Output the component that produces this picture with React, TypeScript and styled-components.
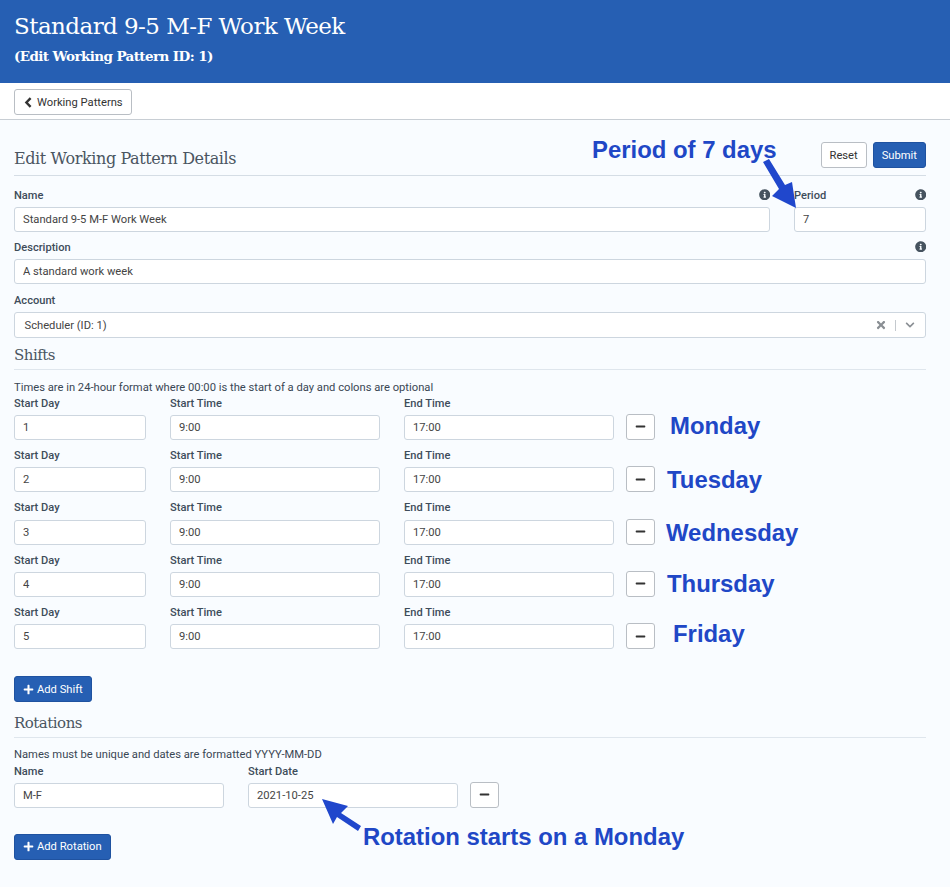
import React from "react";
import styled, { createGlobalStyle } from "styled-components";
import { FaChevronDown, FaInfoCircle, FaMinus, FaPlus, FaTimes } from "react-icons/fa";

const Global = createGlobalStyle`
  html, body { margin: 0; padding: 0; background: #f9fcff; }
  body { font-family: Roboto, "Liberation Sans", sans-serif; color: #3a4754; font-size: 11.2px; }
`;
const Page = styled.div`position: relative; height: 887px; overflow: hidden; background: #f9fcff;`;
const Header = styled.header`
  height: 83px; box-sizing: border-box; background: #265fb3; color: #fff; padding: 11px 14px 0;
  font-family: "DejaVu Serif", serif;
`;
const Title = styled.h1`margin: 0; font-weight: 400; font-size: 23px; line-height: 30px; letter-spacing: -0.55px;`;
const Subtitle = styled.h2`margin: 3px 0 0; font-weight: 700; font-size: 13.5px; line-height: 24px; letter-spacing: -0.6px;`;
const Toolbar = styled.div`
  height: 37px; box-sizing: border-box; background: #fff; border-bottom: 1px solid #c8ced4;
  padding: 6px 14px 0;
`;
const Button = styled.button<{ $primary?: boolean }>`
  display: inline-flex; align-items: center; justify-content: center; gap: 4px; box-sizing: border-box;
  height: 26px; padding: 0 8px; border-radius: 3px; font: 400 11.2px Roboto, sans-serif; cursor: pointer;
  background: ${p => (p.$primary ? "#265fb3" : "#fff")};
  color: ${p => (p.$primary ? "#fff" : "#333")};
  border: 1px solid ${p => (p.$primary ? "#1f52a0" : "#b9bec4")};
  svg { font-size: 11px; margin-right: -1px; }
`;
const Content = styled.main`padding: 22px 24px 0 14px;`;
const TopRow = styled.div`
  display: flex; align-items: flex-end; justify-content: space-between; height: 34px;
  border-bottom: 1px solid #d5dde5; padding-bottom: 7px; box-sizing: border-box; margin-bottom: 3.67px;
`;
const TopActions = styled.div`display: flex; gap: 6px;`;
const SectionTitle = styled.h3<{ $small?: boolean }>`
  margin: 0; font: 400 ${p => (p.$small ? 15 : 16)}px/20px "DejaVu Serif", serif; color: #4a5561;
  letter-spacing: ${p => (p.$small ? -0.5 : -0.4)}px;
`;
const TopTitle = styled(SectionTitle)`margin-bottom: -1px;`;
const SectionHead = styled.div<{ $top: number }>`
  border-bottom: 1px solid #dfe6ed; height: 25px; box-sizing: border-box; margin-top: ${p => p.$top}px;
`;
const Help = styled.p<{ $top: number }>`
  margin: ${p => p.$top}px 0 0; font-size: 11.2px; line-height: 18px; height: 18px; color: #3a4754;
`;
const RowList = styled.div<{ $top: number }>`margin-top: ${p => p.$top}px;`;
const Row = styled.div`display: flex; gap: 24px; align-items: flex-end;`;
const FieldBox = styled.div<{ $width?: number }>`
  ${p => (p.$width ? `width: ${p.$width}px; flex: none;` : "flex: 1;")}
  min-width: 0;
`;
const LabelRow = styled.div`
  display: flex; justify-content: space-between; align-items: center; height: 27.33px;
  box-sizing: border-box; padding-top: 4px;
  font-weight: 500; font-size: 11.1px; color: #3e4c5a;
  svg { font-size: 11.5px; color: #46535f; margin-bottom: 2px; }
`;
const AccountLabel = styled(LabelRow)`padding-top: 5px; height: 28px;`;
const Input = styled.input`
  display: block; width: 100%; height: 25px; box-sizing: border-box; padding: 0 8px;
  border: 1px solid #cdd6df; border-radius: 3px; background: #fff; color: #444;
  font: 400 11.2px Roboto, sans-serif; outline: none;
`;
const Select = styled.div`
  display: flex; align-items: center; height: 26px; box-sizing: border-box; padding: 0 10px 0 9.5px;
  border: 1px solid #cdd6df; border-radius: 3px; background: #fff; color: #444; font-size: 11.2px;
`;
const SelectValue = styled.span`flex: 1;`;
const SelectIcons = styled.span`display: flex; align-items: center; gap: 9px; color: #8a8f94;`;
const ClearIcon = styled(FaTimes)`font-size: 12px; margin-right: -1px;`;
const OpenIcon = styled(FaChevronDown)`font-size: 10px;`;
const Divider = styled.span`width: 1px; height: 11px; background: #c4c9ce;`;
const MinusButton = styled.button`
  flex: none; display: flex; align-items: center; justify-content: center; width: 29px; height: 26px;
  margin: 0 0 0 -12px; padding: 0; background: #fff; border: 1px solid #b9bec4; border-radius: 3px; color: #333;
  svg { font-size: 11px; }
`;
const AddBar = styled.div<{ $top: number }>`margin-top: ${p => p.$top}px;`;
const Note = styled.span<{ $x: number; $y: number }>`
  position: absolute; left: ${p => p.$x}px; top: ${p => p.$y}px; white-space: nowrap;
  font: 700 23.9px/28px "Liberation Sans", Arial, sans-serif; color: #2047c6;
`;
const Overlay = styled.svg`position: absolute; left: 0; top: 0; pointer-events: none;`;

const BackIcon = () => (
  <svg width="1em" height="1em" viewBox="0 0 11 11" aria-hidden="true">
    <path d="M7.6 1.2 L3.4 5.5 L7.6 9.8" fill="none" stroke="currentColor" strokeWidth="2.4" />
  </svg>
);

const Field = ({ label, value, width, info }: { label: string; value: string; width?: number; info?: boolean }) => (
  <FieldBox $width={width}>
    <LabelRow>{label}{info && <FaInfoCircle />}</LabelRow>
    <Input readOnly value={value} />
  </FieldBox>
);

const days = ["1", "2", "3", "4", "5"];

export default function App() {
  return (
    <Page>
      <Global />
      <Header>
        <Title>Standard 9-5 M-F Work Week</Title>
        <Subtitle>(Edit Working Pattern ID: 1)</Subtitle>
      </Header>
      <Toolbar>
        <Button><BackIcon /> Working Patterns</Button>
      </Toolbar>
      <Content>
        <TopRow>
          <TopTitle>Edit Working Pattern Details</TopTitle>
          <TopActions>
            <Button>Reset</Button>
            <Button $primary>Submit</Button>
          </TopActions>
        </TopRow>
        <Row>
          <Field label="Name" value="Standard 9-5 M-F Work Week" info />
          <Field label="Period" value="7" width={132} info />
        </Row>
        <Field label="Description" value="A standard work week" info />
        <AccountLabel>Account</AccountLabel>
        <Select>
          <SelectValue>Scheduler (ID: 1)</SelectValue>
          <SelectIcons><ClearIcon /><Divider /><OpenIcon /></SelectIcons>
        </Select>
        <SectionHead $top={6.67}><SectionTitle $small>Shifts</SectionTitle></SectionHead>
        <Help $top={9}>Times are in 24-hour format where 00:00 is the start of a day and colons are optional</Help>
        <RowList $top={-9.33}>
          {days.map(d => (
            <Row key={d}>
              <Field label="Start Day" value={d} width={132} />
              <Field label="Start Time" value="9:00" width={210} />
              <Field label="End Time" value="17:00" width={210} />
              <MinusButton aria-label="Remove shift"><FaMinus /></MinusButton>
            </Row>
          ))}
        </RowList>
        <AddBar $top={27}><Button $primary><FaPlus /> Add Shift</Button></AddBar>
        <SectionHead $top={10.67}><SectionTitle $small>Rotations</SectionTitle></SectionHead>
        <Help $top={8}>Names must be unique and dates are formatted YYYY-MM-DD</Help>
        <RowList $top={-8.33}>
          <Row>
            <Field label="Name" value="M-F" width={210} />
            <Field label="Start Date" value="2021-10-25" width={210} />
            <MinusButton aria-label="Remove rotation"><FaMinus /></MinusButton>
          </Row>
        </RowList>
        <AddBar $top={26}><Button $primary><FaPlus /> Add Rotation</Button></AddBar>
      </Content>

      <Overlay width={950} height={887} viewBox="0 0 950 887" fill="#2047cc">
        <path d="M763 162 L769 159 L785 185 L792 182 L796 208 L772 196 L779 189 Z" />
        <path d="M322 799 L348 806 L341 813 L361 826 L358 831 L337 817 L333 824 Z" />
      </Overlay>
      <Note $x={592} $y={136}>Period of 7 days</Note>
      <Note $x={670} $y={412}>Monday</Note>
      <Note $x={667} $y={466}>Tuesday</Note>
      <Note $x={666} $y={519}>Wednesday</Note>
      <Note $x={667} $y={570}>Thursday</Note>
      <Note $x={673} $y={620}>Friday</Note>
      <Note $x={363} $y={823}>Rotation starts on a Monday</Note>
    </Page>
  );
}
